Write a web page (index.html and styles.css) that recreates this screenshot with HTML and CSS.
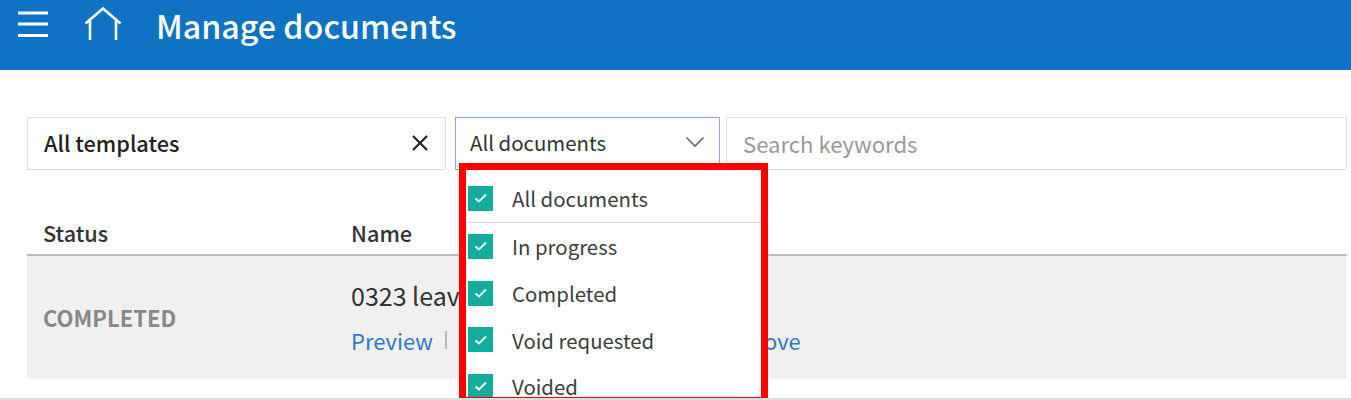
FILE: index.html
```html
<!DOCTYPE html>
<html>
<head>
    <title>Manage documents</title>
    <link rel="stylesheet" href="styles.css">
</head>
<body>
<header class="topbar">
    <svg class="menu-icon" width="34" height="28" viewBox="0 0 34 28" aria-hidden="true">
        <path d="M2 3H32M2 14H32M2 25.500H32" fill="none" stroke="#fff" stroke-width="2.800"/>
    </svg>
    <svg class="home-icon" width="38" height="34" viewBox="0 0 38 34" aria-hidden="true">
        <path d="M1.500 16.500L19 1.500L36.500 16.500M6 13V33M32 13V33" fill="none" stroke="#fff" stroke-width="2.600"/>
    </svg>
    <h1>Manage documents</h1>
</header>

<main class="content">
    <div class="filters">
        <div class="field field-template">
            <span>All templates</span>
            <svg width="16" height="16" viewBox="0 0 16 16" aria-hidden="true">
                <path d="M1 1L15 15M15 1L1 15" stroke="#222" stroke-width="2.200"/>
            </svg>
        </div>
        <div class="status-filter">
            <div class="field field-status">
                <span>All documents</span>
                <svg width="20" height="12" viewBox="0 0 20 12" aria-hidden="true">
                    <path d="M1.500 1.500L10 10L18.500 1.500" fill="none" stroke="#666" stroke-width="1.600"/>
                </svg>
            </div>
            <ul class="status-menu">
                <li class="status-all"><span class="check"><svg width="14" height="10" viewBox="0 0 14 10"><path d="M1.500 5.500L5 8.500L12 1.500" fill="none" stroke="#fff" stroke-width="2"/></svg></span>All documents</li>
                <li><span class="check"><svg width="14" height="10" viewBox="0 0 14 10"><path d="M1.500 5.500L5 8.500L12 1.500" fill="none" stroke="#fff" stroke-width="2"/></svg></span>In progress</li>
                <li><span class="check"><svg width="14" height="10" viewBox="0 0 14 10"><path d="M1.500 5.500L5 8.500L12 1.500" fill="none" stroke="#fff" stroke-width="2"/></svg></span>Completed</li>
                <li><span class="check"><svg width="14" height="10" viewBox="0 0 14 10"><path d="M1.500 5.500L5 8.500L12 1.500" fill="none" stroke="#fff" stroke-width="2"/></svg></span>Void requested</li>
                <li><span class="check"><svg width="14" height="10" viewBox="0 0 14 10"><path d="M1.500 5.500L5 8.500L12 1.500" fill="none" stroke="#fff" stroke-width="2"/></svg></span>Voided</li>
            </ul>
        </div>
        <div class="field field-search">Search keywords</div>
    </div>

    <div class="table-head">
        <div class="col-status">Status</div>
        <div>Name</div>
    </div>
    <div class="table-row">
        <div class="col-status state">COMPLETED</div>
        <div class="doc">
            <div class="doc-name">0323 leav</div>
            <div class="doc-links">
                <a href="#">Preview</a><i class="sep"></i><a href="#" class="link-move">ove</a>
            </div>
        </div>
    </div>
</main>
</body>
</html>
```

FILE: styles.css
```css
* { box-sizing: border-box; }
html { height: 400px; overflow: hidden; }
body { margin: 0; height: 400px; background: #fff; font-family: "Noto Sans CJK KR", "Noto Sans", sans-serif; color: #333; border-bottom: 2px solid #ddd; }

.topbar { height: 70px; background: #0f72c3; display: flex; align-items: center; padding: 0 0 22px 16px; }
.menu-icon { margin-right: 34px; }
.home-icon { margin-right: 34px; }
.topbar h1 { margin: 2px 0 0; font-size: 32.200px; font-weight: 500; color: #fff; line-height: 1; }

.content { padding: 47px 4px 0 27px; }

.filters { display: flex; height: 53px; }
.field { height: 53px; background: #fff; border: 1px solid #ddd; display: flex; align-items: center; justify-content: space-between; font-size: 21.700px; color: #222; padding-bottom: 2px; }
.field-template { width: 419px; padding-left: 16px; padding-right: 17px; margin-right: 9px; font-weight: 500; }
.status-filter { position: relative; width: 265px; margin-right: 6px; }
.field-status { border: 1px solid #8aa6dc; padding-left: 14px; padding-right: 14px; padding-bottom: 4px; color: #333; font-size: 20.400px; }
.field-search { flex: 1; padding-left: 16px; padding-right: 17px; color: #999; font-size: 22.100px; }

.status-menu { position: absolute; z-index: 2; left: 4px; top: 46px; width: 309px; height: 241px; margin: 0; padding: 0; list-style: none; background: #fff; border: 7px solid #f00; overflow: hidden; font-size: 20.400px; color: #3d3d3d; }
.status-menu li { height: 46.700px; display: flex; align-items: center; padding-left: 2px; }
.status-menu .status-all { height: 53px; padding-top: 4px; border-bottom: 1px solid #ddd; }
.check { width: 25px; height: 25px; margin-right: 19px; background: #14ad9d; display: flex; align-items: center; justify-content: center; }

.table-head { display: flex; height: 86px; padding-left: 16px; align-items: flex-end; padding-bottom: 6px; font-size: 21.700px; font-weight: 500; color: #333; border-bottom: 2px solid #bbb; }
.col-status { width: 308px; }

.table-row { height: 123px; background: #f0f0f0; display: flex; align-items: center; padding-left: 16px; padding-bottom: 2px; }
.state { font-size: 22px; font-weight: 700; color: #888; }
.doc-name { white-space: nowrap; font-size: 25px; color: #333; margin-bottom: 11px; }
.doc-links { display: flex; align-items: center; font-size: 22px; }
.doc-links a { color: #2f78c8; text-decoration: none; }
.sep { width: 2px; height: 18px; background: #bbb; margin: 0 12px; }
.link-move { margin-left: 305px; }
```
